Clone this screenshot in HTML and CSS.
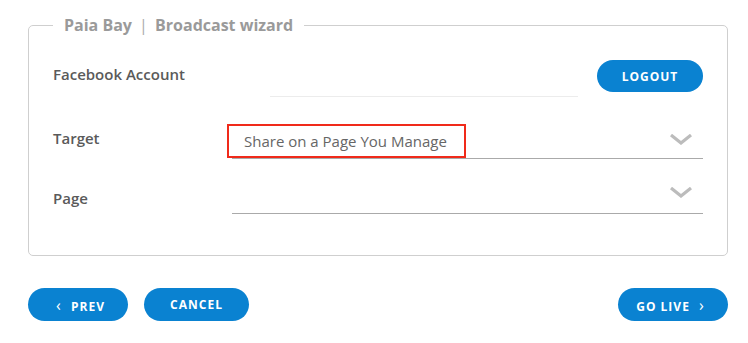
FILE: index.html
```html
<!DOCTYPE html>
<html lang="en">
<head>
    <meta charset="UTF-8">
    <meta name="viewport" content="width=device-width, initial-scale=1.0">
    <title>Broadcast wizard</title>
    <link rel="stylesheet" href="styles.css">
</head>
<body>
    <div class="wizard">
        <fieldset class="panel">
            <legend>Paia Bay <span class="sep">|</span> Broadcast wizard</legend>

            <div class="row row-account">
                <label>Facebook Account</label>
                <div class="account-field"></div>
                <button class="btn btn-logout">LOGOUT</button>
            </div>

            <div class="row row-target">
                <label>Target</label>
                <div class="select">
                    <span class="select-value">Share on a Page You Manage</span>
                    <span class="highlight"></span>
                    <svg class="chevron" width="22" height="11" viewBox="0 0 22 11"><path d="M1 1 L11 9 L21 1" fill="none" stroke="#bcbcbc" stroke-width="3.2"/></svg>
                </div>
            </div>

            <div class="row row-page">
                <label>Page</label>
                <div class="select">
                    <span class="select-value"></span>
                    <svg class="chevron" width="22" height="11" viewBox="0 0 22 11"><path d="M1 1 L11 9 L21 1" fill="none" stroke="#bcbcbc" stroke-width="3.2"/></svg>
                </div>
            </div>
        </fieldset>

        <div class="actions">
            <button class="btn btn-prev"><span class="arrow">&lsaquo;</span> PREV</button>
            <button class="btn btn-cancel">CANCEL</button>
            <button class="btn btn-live">GO LIVE <span class="arrow">&rsaquo;</span></button>
        </div>
    </div>
</body>
</html>
```

FILE: styles.css
```css
body {
    margin: 0;
    font-family: "Open Sans", Lato, sans-serif;
    color: #555;
    background: #fff;
}
.wizard {
    padding: 15px 20px 0 28px;
}
.panel {
    margin: 0;
    border: 1px solid #cfcfcf;
    border-radius: 5px;
    padding: 20px 24px 41px 24px;
}
.panel legend {
    margin-left: 0;
    padding: 0 11px;
    font-size: 16px;
    font-weight: 700;
    color: #9a9a9a;
    line-height: 20px;
}
.sep {
    font-weight: 400;
    padding: 0 3px;
    color: #aaa;
}
.row {
    display: flex;
    align-items: center;
}
.row label {
    width: 179px;
    flex-shrink: 0;
    font-size: 15px;
    font-weight: 600;
    color: #5a5a5a;
}
.row-account label {
    margin-bottom: 4px;
}
.account-field {
    margin-left: 38px;
    width: 308px;
    height: 41px;
    border-bottom: 1px solid #ececec;
}
.btn {
    border: none;
    background-color: #0a82d1;
    color: #fff;
    font-family: "Open Sans", Lato, sans-serif;
    font-weight: 700;
    font-size: 12px;
    letter-spacing: 1px;
    height: 33px;
    border-radius: 17px;
    cursor: pointer;
}
.btn-logout {
    margin-left: auto;
    width: 106px;
    height: 32px;
}
.row-target {
    margin-top: 26px;
}
.row-target label {
    margin-bottom: 6px;
}
.row-page {
    margin-top: 19px;
}
.row-page label {
    margin-top: 4px;
}
.select {
    position: relative;
    flex: 1;
    height: 35px;
    border-bottom: 1px solid #aaa;
    display: flex;
    align-items: center;
}
.select-value {
    padding-left: 12px;
    font-size: 15px;
    color: #666;
}
.chevron {
    margin-left: auto;
    margin-right: 11px;
}
.row-target .chevron {
    margin-top: -2px;
}
.row-page .chevron {
    margin-top: -6px;
}
.highlight {
    position: absolute;
    left: -5px;
    top: 1px;
    width: 235px;
    height: 30px;
    border: 2px solid #f02a1a;
}
.actions {
    display: flex;
    gap: 16px;
    margin-top: 32px;
}
.btn-prev {
    width: 100px;
}
.btn-cancel {
    width: 105px;
}
.btn-live {
    margin-left: auto;
    width: 110px;
}
.arrow {
    font-size: 16px;
    font-weight: 400;
    padding: 0 5px;
}
```
